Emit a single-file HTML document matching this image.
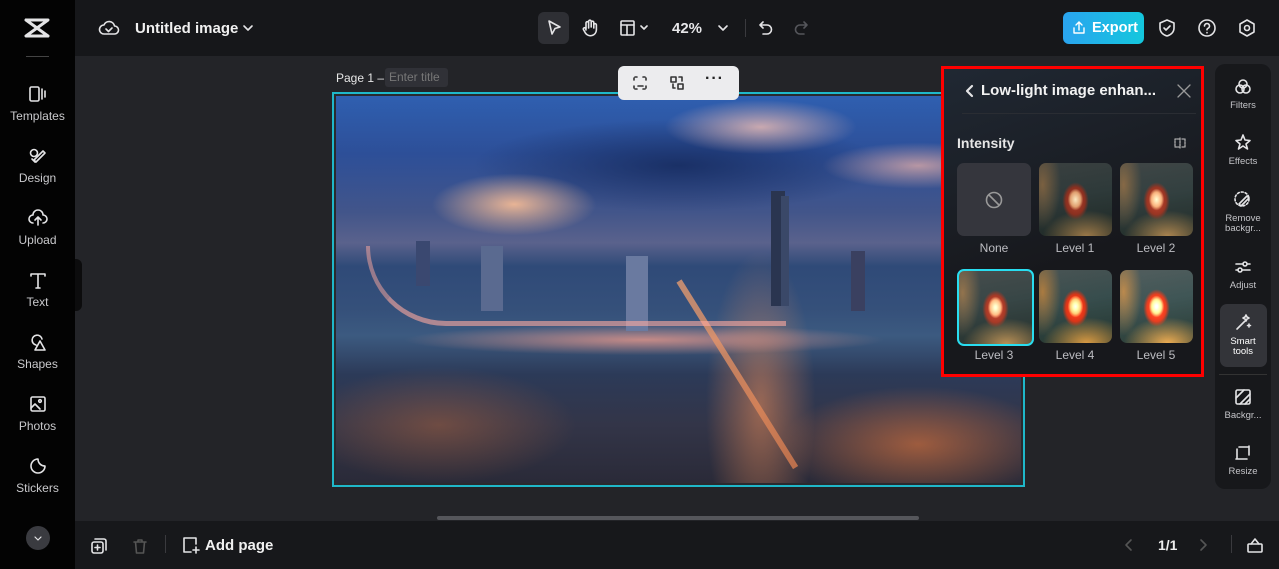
<!DOCTYPE html>
<html><head><meta charset="utf-8"><style>
*{box-sizing:border-box;margin:0;padding:0}
body{width:1279px;height:569px;overflow:hidden;background:#232428;font-family:"Liberation Sans",sans-serif;color:#e6e6e8;position:relative}
.abs{position:absolute}
#side{left:0;top:0;width:75px;height:569px;background:#030303}
.si{position:absolute;left:0;width:75px;text-align:center;font-size:12px;color:#c9c9cc}
.si svg{display:block;margin:0 auto 5px}
#top{left:75px;top:0;width:1204px;height:56px;background:#16171a}
#bot{left:75px;top:521px;width:1204px;height:48px;background:#17181b}
svg{fill:none;stroke:#e4e4e6;stroke-width:1.6;stroke-linecap:round;stroke-linejoin:round}
#img{left:332px;top:92px;width:693px;height:395px;border:2px solid #1fb7c9;overflow:hidden;background:#2a2a2e}
#img .in{position:absolute;inset:2px;overflow:hidden;background:
radial-gradient(ellipse 12% 8% at 26% 28%,rgba(250,190,150,.9),transparent),
radial-gradient(ellipse 14% 7% at 62% 8%,rgba(240,190,180,.8),transparent),
radial-gradient(ellipse 14% 6% at 85% 18%,rgba(240,180,170,.7),transparent),
radial-gradient(ellipse 30% 12% at 50% 18%,rgba(20,40,90,.8),transparent),
radial-gradient(ellipse 35% 4% at 45% 63%,rgba(255,160,140,.7),transparent),
radial-gradient(ellipse 8% 40% at 62% 80%,rgba(255,150,90,.5),transparent),
radial-gradient(ellipse 20% 15% at 85% 90%,rgba(230,120,60,.6),transparent),
radial-gradient(ellipse 20% 15% at 15% 85%,rgba(200,110,60,.4),transparent),
linear-gradient(180deg,#2f5fb0 0%,#2d4f98 15%,#42558a 30%,#5a628c 38%,#2f4a78 44%,#35507a 55%,#3c5a80 62%,#2c3a58 72%,#333548 85%,#2a2a38 100%)}
#panel{left:941px;top:66px;width:263px;height:311px;background:linear-gradient(160deg,#202833,#17181c 60%);border:3px solid #f00}
.th{position:absolute;width:73px;height:73px;border-radius:7px;overflow:hidden;background:
radial-gradient(ellipse 14% 20% at 50% 50%,#fbe8c0 0%,#e0a070 50%,transparent 75%),
radial-gradient(ellipse 24% 34% at 50% 52%,#b8402c 0%,#8a3020 55%,transparent 75%),
radial-gradient(ellipse 60% 35% at 65% 100%,#9a7848,transparent),
radial-gradient(ellipse 25% 60% at 5% 30%,#7a6040,transparent),
linear-gradient(170deg,#3a4040 0%,#2e3a3a 45%,#1e2824 100%)}
.lb{position:absolute;width:80px;text-align:center;font-size:12px;color:#bdbdc2}
#rt{left:1215px;top:64px;width:56px;height:425px;background:#17181b;border-radius:10px}
.ri{position:absolute;left:0;width:56px;text-align:center;font-size:9.5px;color:#c4c4c8;line-height:10px}
.ri svg{display:block;margin:0 auto 4px}
</style></head><body>
<div id="side" class="abs">
 <svg class="abs" style="left:24px;top:17px;stroke-width:3" width="26" height="22" viewBox="0 0 26 22"><path d="M2 3h22L2 19h22M2 3l22 16"/></svg>
 <div class="abs" style="left:26px;top:56px;width:23px;height:1px;background:#444"></div>
 <div class="si" style="top:84px"><svg width="20" height="20" viewBox="0 0 20 18"><rect x="2" y="2" width="9" height="14" rx="1.5"/><path d="M14 4v10M17 6v6"/></svg>Templates</div>
 <div class="si" style="top:146px"><svg width="20" height="20" viewBox="0 0 20 18"><circle cx="6" cy="6" r="3.5"/><path d="M8 15l9-9-2-2-9 9zM4 12l3 3"/></svg>Design</div>
 <div class="si" style="top:208px"><svg width="20" height="20" viewBox="0 0 20 18"><path d="M5 14a4 4 0 0 1 0-8 5 5 0 0 1 10 0 4 4 0 0 1 0 8M10 16V9M7 11l3-3 3 3"/></svg>Upload</div>
 <div class="si" style="top:270px"><svg width="20" height="20" viewBox="0 0 20 18"><path d="M3 3h14M10 3v14M3 3v2M17 3v2M8 17h4"/></svg>Text</div>
 <div class="si" style="top:332px"><svg width="20" height="20" viewBox="0 0 20 18"><path d="M8 12a5 5 0 1 1 6-6M12 8l5 9H7z"/></svg>Shapes</div>
 <div class="si" style="top:394px"><svg width="20" height="20" viewBox="0 0 20 18"><rect x="3" y="2" width="14" height="14" rx="1.5"/><circle cx="12" cy="6" r="1.3"/><path d="M3 13l4-4 5 5"/></svg>Photos</div>
 <div class="si" style="top:456px"><svg width="20" height="20" viewBox="0 0 20 18"><path d="M17 9a7 7 0 1 1-7-7c0 4 3 7 7 7z"/></svg>Stickers</div>
 <div class="abs" style="left:26px;top:526px;width:24px;height:24px;border-radius:50%;background:#3a3b40"><svg width="24" height="24" viewBox="0 0 24 24" style="stroke-width:1.2"><path d="M9 11l3 3 3-3"/></svg></div>
</div>
<div class="abs" style="left:75px;top:259px;width:7px;height:52px;background:#0c0c0d;border-radius:0 6px 6px 0"></div>
<div id="top" class="abs">
 <svg class="abs" style="left:23px;top:18px" width="22" height="20" viewBox="0 0 22 20"><path d="M6 16a4.5 4.5 0 0 1 0-9 5.5 5.5 0 0 1 10.5 1 4 4 0 0 1 0 8z"/><path d="M8 11l2.5 2.5L14 10"/></svg>
 <div class="abs" style="left:60px;top:20px;font-size:15px;font-weight:bold;color:#f0f0f0">Untitled image</div>
 <svg class="abs" style="left:166px;top:21px" width="14" height="14" viewBox="0 0 14 14"><path d="M3 5l4 4 4-4"/></svg>
 <div class="abs" style="left:463px;top:12px;width:31px;height:32px;border-radius:6px;background:#2e2f34"></div>
 <svg class="abs" style="left:469px;top:18px" width="20" height="20" viewBox="0 0 20 20"><path d="M5 3l11 6-5 1.5L8 16z"/></svg>
 <svg class="abs" style="left:505px;top:18px" width="20" height="20" viewBox="0 0 20 20"><path d="M6 11V5a1.3 1.3 0 0 1 2.6 0v5M8.6 9V3.5a1.3 1.3 0 0 1 2.6 0V9M11.2 9V4.5a1.3 1.3 0 0 1 2.6 0V10M13.8 10V7a1.3 1.3 0 0 1 2.6 0v5a6 6 0 0 1-11 3l-2-3.5a1.3 1.3 0 0 1 2.2-1.3L6 12"/></svg>
 <svg class="abs" style="left:543px;top:18px" width="34" height="20" viewBox="0 0 34 20"><rect x="3" y="3" width="13" height="14" rx="1"/><path d="M3 7h13M9 7v10M23 8l3 3 3-3"/></svg>
 <div class="abs" style="left:597px;top:20px;font-size:15px;font-weight:bold">42%</div>
 <svg class="abs" style="left:641px;top:21px" width="14" height="14" viewBox="0 0 14 14"><path d="M3 5l4 4 4-4"/></svg>
 <div class="abs" style="left:670px;top:19px;width:1px;height:18px;background:#3a3a3e"></div>
 <svg class="abs" style="left:681px;top:18px" width="20" height="20" viewBox="0 0 20 20"><path d="M7 4L4 7l3 3M4 7h7a4.5 4.5 0 0 1 0 9H7"/></svg>
 <svg class="abs" style="left:716px;top:18px;stroke:#55565b" width="20" height="20" viewBox="0 0 20 20"><path d="M13 4l3 3-3 3M16 7H9a4.5 4.5 0 0 0 0 9h4"/></svg>
 <div class="abs" style="left:988px;top:12px;width:81px;height:32px;border-radius:6px;background:linear-gradient(90deg,#2aa4ef,#14c7dd);color:#fff;font-weight:bold;font-size:14.5px;line-height:33px;padding-left:29px">Export</div>
 <svg class="abs" style="left:996px;top:20px;stroke:#fff;stroke-width:1.4" width="16" height="16" viewBox="0 0 16 16"><path d="M8 10V2M5 5l3-3 3 3M3 8v5h10V8"/></svg>
 <svg class="abs" style="left:1082px;top:18px" width="20" height="20" viewBox="0 0 20 20"><path d="M10 2l7 3v5c0 4-3 7-7 8-4-1-7-4-7-8V5z"/><path d="M7 10l2 2 4-4"/></svg>
 <svg class="abs" style="left:1122px;top:18px" width="20" height="20" viewBox="0 0 20 20"><circle cx="10" cy="10" r="8"/><path d="M7.5 8a2.5 2.5 0 1 1 3.5 2.3c-.7.3-1 .8-1 1.5M10 14.5v.3"/></svg>
 <svg class="abs" style="left:1162px;top:18px" width="20" height="20" viewBox="0 0 20 20"><path d="M10 2l7 4v8l-7 4-7-4V6z"/><circle cx="10" cy="10" r="2.5"/></svg>
</div>
<div class="abs" style="left:336px;top:71px;font-size:12px;color:#e6e6e6">Page 1 –</div>
<div class="abs" style="left:385px;top:68px;width:63px;height:19px;border-radius:3px;background:#303137;font-size:12px;color:#777;line-height:19px;padding-left:4px">Enter title</div>
<div id="img" class="abs"><div class="in">
 <div class="abs" style="left:435px;top:95px;width:14px;height:115px;background:#2a3550"></div>
 <div class="abs" style="left:445px;top:100px;width:8px;height:110px;background:#3a4868"></div>
 <div class="abs" style="left:145px;top:150px;width:22px;height:65px;background:#5a6a90"></div>
 <div class="abs" style="left:290px;top:160px;width:22px;height:75px;background:#6a7aa0"></div>
 <div class="abs" style="left:80px;top:145px;width:14px;height:45px;background:#3a4870"></div>
 <div class="abs" style="left:515px;top:155px;width:14px;height:60px;background:#3a4060"></div>
 <div class="abs" style="left:340px;top:185px;width:6px;height:220px;background:linear-gradient(#f0a070,#e08050);transform:rotate(-32deg);transform-origin:top;opacity:.75"></div>
 <div class="abs" style="left:30px;top:150px;width:420px;height:80px;border-bottom:5px solid rgba(255,170,160,.6);border-left:4px solid rgba(255,170,160,.5);border-radius:0 0 0 220px"></div>
</div></div>
<div class="abs" style="left:618px;top:66px;width:121px;height:34px;border-radius:6px;background:#ececee">
 <svg class="abs" style="left:13px;top:8px;stroke:#333" width="18" height="18" viewBox="0 0 18 18"><path d="M3 6V3h3M12 3h3v3M15 12v3h-3M6 15H3v-3" stroke-dasharray="2 2"/><path d="M7 12h5"/></svg>
 <svg class="abs" style="left:50px;top:8px;stroke:#333" width="18" height="18" viewBox="0 0 18 18"><rect x="3" y="3" width="5" height="5"/><rect x="10" y="10" width="5" height="5"/><path d="M11 3h3v4M5 10v4h2"/></svg>
 <div class="abs" style="left:87px;top:4px;font-size:16px;color:#222;font-weight:bold;letter-spacing:1px">···</div>
</div>
<div id="panel" class="abs">
 <svg class="abs" style="left:19px;top:14px;stroke-width:2.2" width="14" height="16" viewBox="0 0 14 16"><path d="M9 3L4 8l5 5"/></svg>
 <div class="abs" style="left:37px;top:13px;font-size:15px;font-weight:bold;color:#f2f2f2;white-space:nowrap">Low-light image enhan...</div>
 <svg class="abs" style="left:232px;top:14px;stroke:#999;stroke-width:1.3" width="16" height="16" viewBox="0 0 16 16"><path d="M2 2l12 12M14 2L2 14"/></svg>
 <div class="abs" style="left:18px;top:44px;width:234px;height:1px;background:#2a2d33"></div>
 <div class="abs" style="left:13px;top:66px;font-size:14px;font-weight:bold;color:#e6e6e6">Intensity</div>
 <svg class="abs" style="left:228px;top:66px;stroke:#aaa;stroke-width:1.3" width="16" height="16" viewBox="0 0 16 16"><path d="M8 3v10M7 4H3v8h4M10 4h3v8h-3" stroke-dasharray="2 1"/></svg>
 <div class="abs" style="left:13px;top:94px;width:74px;height:73px;border-radius:7px;background:#35363d"><svg class="abs" style="left:27px;top:27px;stroke:#999" width="20" height="20" viewBox="0 0 20 20"><circle cx="10" cy="10" r="7.5"/><path d="M5 5l10 10"/></svg></div>
 <div class="th" style="left:95px;top:94px"></div>
 <div class="th" style="left:176px;top:94px;filter:brightness(1.1)"></div>
 <div class="lb" style="left:10px;top:172px">None</div>
 <div class="lb" style="left:91px;top:172px">Level 1</div>
 <div class="lb" style="left:172px;top:172px">Level 2</div>
 <div class="th" style="left:13px;top:200px;border:2px solid #22b8c8;width:77px;height:77px;filter:brightness(1.2)"></div>
 <div class="th" style="left:95px;top:201px;filter:brightness(1.3) saturate(1.4)"></div>
 <div class="th" style="left:176px;top:201px;filter:brightness(1.45) saturate(1.3)"></div>
 <div class="lb" style="left:10px;top:279px">Level 3</div>
 <div class="lb" style="left:91px;top:279px">Level 4</div>
 <div class="lb" style="left:172px;top:279px">Level 5</div>
</div>
<div id="rt" class="abs">
 <div class="ri" style="top:13px"><svg width="20" height="20" viewBox="0 0 20 20"><circle cx="10" cy="7" r="4"/><circle cx="7" cy="12" r="4"/><circle cx="13" cy="12" r="4"/></svg>Filters</div>
 <div class="ri" style="top:69px"><svg width="20" height="20" viewBox="0 0 20 20"><path d="M10 2l2 5 5 .5-4 3.5 1.5 5L10 13l-4.5 3 1.5-5-4-3.5 5-.5z"/></svg>Effects</div>
 <div class="ri" style="top:126px"><svg width="20" height="20" viewBox="0 0 20 20"><circle cx="9" cy="9" r="7" stroke-dasharray="2 2"/><path d="M6 14l8-8 2 2-8 8z"/></svg>Remove<br>backgr...</div>
 <div class="ri" style="top:193px"><svg width="20" height="20" viewBox="0 0 20 20"><path d="M3 7h14M3 13h14"/><circle cx="12" cy="7" r="2" fill="#17181b"/><circle cx="7" cy="13" r="2" fill="#17181b"/></svg>Adjust</div>
 <div class="abs" style="left:5px;top:240px;width:47px;height:63px;border-radius:7px;background:#333439"></div>
 <div class="ri" style="top:249px;color:#fff"><svg width="20" height="20" viewBox="0 0 20 20"><path d="M4 16l9-9M12 4l1-2 1 2 2 1-2 1-1 2-1-2-2-1zM16 11v3M14.5 12.5h3"/></svg>Smart<br>tools</div>
 <div class="abs" style="left:4px;top:310px;width:48px;height:1px;background:#333"></div>
 <div class="ri" style="top:323px"><svg width="20" height="20" viewBox="0 0 20 20"><rect x="3" y="3" width="14" height="14" rx="1.5"/><path d="M3 11l8-8M7 17l10-10M12 17l5-5"/></svg>Backgr...</div>
 <div class="ri" style="top:379px"><svg width="20" height="20" viewBox="0 0 20 20"><path d="M4 6v10h10M6 4h10v8M16 3v2M3 16h2"/></svg>Resize</div>
</div>
<div class="abs" style="left:437px;top:516px;width:482px;height:4px;border-radius:2px;background:#55565b"></div>
<div id="bot" class="abs">
 <svg class="abs" style="left:15px;top:16px" width="18" height="18" viewBox="0 0 18 18"><rect x="2" y="5" width="11" height="11" rx="2"/><path d="M5 2h9a2 2 0 0 1 2 2v9M7.5 8v5M5 10.5h5"/></svg>
 <svg class="abs" style="left:56px;top:16px;stroke:#555" width="18" height="18" viewBox="0 0 18 18"><path d="M3 5h12M7 5V3h4v2M4.5 5l1 11h7l1-11"/></svg>
 <div class="abs" style="left:90px;top:14px;width:1px;height:18px;background:#3a3a3e"></div>
 <svg class="abs" style="left:106px;top:14px" width="20" height="20" viewBox="0 0 20 20"><path d="M15 9V3H3v14h7M15 12v6M12 15h6"/></svg>
 <div class="abs" style="left:130px;top:16px;font-size:15px;font-weight:bold;color:#f0f0f0">Add page</div>
 <svg class="abs" style="left:1047px;top:16px;stroke:#555" width="14" height="16" viewBox="0 0 14 16"><path d="M9 3L4 8l5 5"/></svg>
 <div class="abs" style="left:1083px;top:16px;font-size:14px;font-weight:bold;color:#eee">1/1</div>
 <svg class="abs" style="left:1121px;top:16px;stroke:#555" width="14" height="16" viewBox="0 0 14 16"><path d="M5 3l5 5-5 5"/></svg>
 <div class="abs" style="left:1156px;top:14px;width:1px;height:18px;background:#3a3a3e"></div>
 <svg class="abs" style="left:1170px;top:14px" width="20" height="20" viewBox="0 0 20 20"><rect x="3" y="9" width="14" height="8" rx="1"/><path d="M6 9l4-5 4 5"/></svg>
</div>
</body></html>
